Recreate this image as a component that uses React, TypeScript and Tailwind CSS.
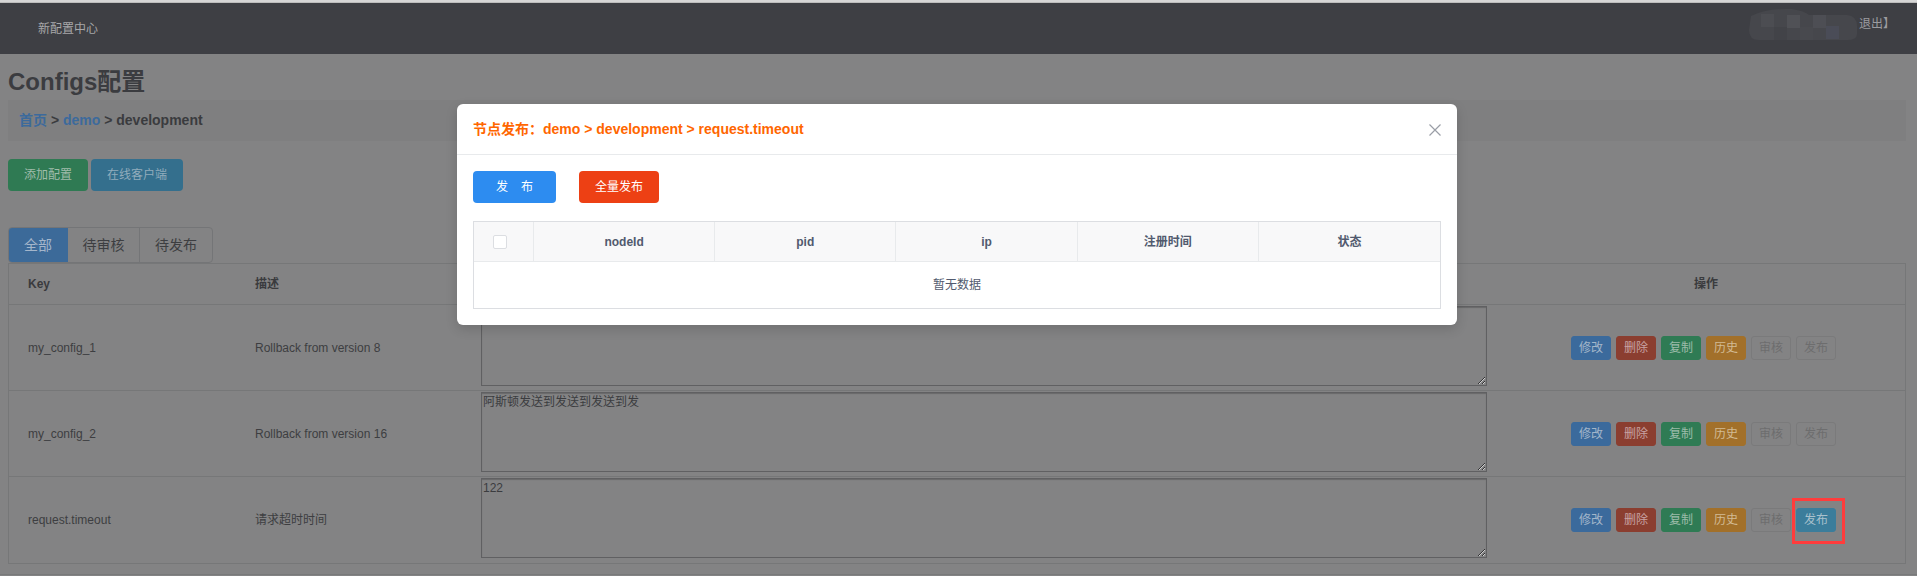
import React from "react";

const rows = [
  { key: "my_config_1", desc: "Rollback from version 8", value: "", canPublish: false },
  { key: "my_config_2", desc: "Rollback from version 16", value: "阿斯顿发送到发送到发送到发", canPublish: false },
  { key: "request.timeout", desc: "请求超时时间", value: "122", canPublish: true },
];

const actionBtns = [
  { label: "修改", cls: "bg-[#3b6a9c] border-[#3b6a9c] text-[#a3b6ca]" },
  { label: "删除", cls: "bg-[#8b3e30] border-[#8b3e30] text-[#c8a3a3]" },
  { label: "复制", cls: "bg-[#2f7b54] border-[#2f7b54] text-[#9dbbaa]" },
  { label: "历史", cls: "bg-[#a2702a] border-[#a2702a] text-[#d2bb95]" },
];

function RowActions({ canPublish }: { canPublish: boolean }) {
  return (
    <div className="flex items-center gap-[5px] pr-[5px]">
      {actionBtns.map((b) => (
        <button
          key={b.label}
          className={`w-[40px] h-[24px] rounded-[3px] border text-[12px] leading-[22px] ${b.cls}`}
        >
          {b.label}
        </button>
      ))}
      <button className="w-[40px] h-[24px] rounded-[3px] border border-[#7a7a7b] text-[12px] leading-[22px] text-[#6d6d6e]">
        审核
      </button>
      {canPublish ? (
        <span className="relative inline-flex">
          <button className="w-[40px] h-[24px] rounded-[3px] border border-[#3b7d9b] bg-[#3b7d9b] text-[12px] leading-[22px] text-[#a9c1cd]">
            发布
          </button>
          {/* red annotation box */}
          <span className="absolute -left-[4px] -top-[10px] w-[53px] h-[46px] border-[3px] border-[#ff3c3c] pointer-events-none"></span>
        </span>
      ) : (
        <button className="w-[40px] h-[24px] rounded-[3px] border border-[#7a7a7b] text-[12px] leading-[22px] text-[#6d6d6e]">
          发布
        </button>
      )}
    </div>
  );
}

function PublishModal() {
  const cols = ["nodeId", "pid", "ip", "注册时间", "状态"];
  return (
    <div className="absolute left-[457px] top-[104px] w-[1000px] bg-white rounded-[6px] shadow-[0_4px_12px_rgba(0,0,0,0.15)]">
      <div className="h-[51px] px-[16px] flex items-center justify-between border-b border-[#e8eaec]">
        <span className="text-[14px] font-bold text-[#ff6600] leading-[20px]">
          节点发布：demo &gt; development &gt; request.timeout
        </span>
        <svg width="12" height="12" viewBox="0 0 12 12" className="mt-[1px]">
          <path d="M0.5 0.5 L11.5 11.5 M11.5 0.5 L0.5 11.5" stroke="#9a9ea6" strokeWidth="1.2" />
        </svg>
      </div>

      <div className="p-[16px]">
        <div className="flex items-center">
          <button className="w-[83px] h-[32px] rounded-[4px] bg-[#2d8cf0] text-white text-[12px] flex items-center justify-center gap-[13px]">
            <span>发</span>
            <span>布</span>
          </button>
          <button className="ml-[23px] w-[80px] h-[32px] rounded-[4px] bg-[#ed4014] text-white text-[12px]">
            全量发布
          </button>
        </div>

        <div className="mt-[18px] border border-[#dcdee2]">
          <div className="grid grid-cols-[60px_repeat(5,1fr)] h-[40px] bg-[#f8f8f9] border-b border-[#e8eaec]">
            <div className="flex items-center pl-[19px] border-r border-[#e8eaec]">
              <span className="w-[14px] h-[14px] border border-[#dcdee2] rounded-[2px] bg-white"></span>
            </div>
            {cols.map((c, i) => (
              <div
                key={c}
                className={`flex items-center justify-center text-[12px] font-bold text-[#515a6e] ${
                  i < cols.length - 1 ? "border-r border-[#e8eaec]" : ""
                }`}
              >
                {c}
              </div>
            ))}
          </div>
          <div className="h-[46px] flex items-center justify-center text-[12px] text-[#515a6e]">
            暂无数据
          </div>
        </div>
      </div>
    </div>
  );
}

export default function App() {
  return (
    <div className="relative w-[1917px] h-[576px] overflow-hidden bg-[#838384] font-['Liberation_Sans','Noto_Sans_CJK_SC',sans-serif]">
      <div className="h-[3px] bg-[#d6d6d6] border-b border-[#bdbdbd]"></div>

      {/* top navbar */}
      <div className="h-[51px] bg-[#3e3f44] flex justify-between pl-[38px] pr-[22px]">
        <div className="flex items-center text-[12px] text-[#a7a7a9]">新配置中心</div>
        <div className="flex items-start pt-[3px]">
          <svg width="112" height="34" viewBox="0 0 112 34">
            <path d="M4 10 Q20 2 45 3 Q58 5 62 9 L100 9 Q110 10 110 20 L110 28 Q110 34 100 34 L12 34 Q2 34 2 24 Z" fill="#46474c" />
            <rect x="14" y="8" width="13" height="13" fill="#4c4d52" />
            <rect x="40" y="9" width="13" height="13" fill="#505156" />
            <rect x="66" y="9" width="13" height="13" fill="#4d4e54" />
            <rect x="79" y="20" width="13" height="13" fill="#4a4c57" />
            <rect x="27" y="21" width="13" height="13" fill="#424348" />
            <rect x="53" y="21" width="13" height="13" fill="#48494e" />
          </svg>
          <span className="text-[12px] leading-[18px] text-[#9c9ca0] mt-[9px]">退出】</span>
        </div>
      </div>

      <div className="ml-[8px] w-[1898px]">
        <h1 className="mt-[13px] text-[24px] leading-[30px] font-bold text-[#3b3c40]">Configs配置</h1>

        <div className="mt-[3px] h-[41px] bg-[#7f7f80] pl-[11px] flex items-center text-[14px] font-bold text-[#3a3b3e]">
          <span className="text-[#3c6a9c]">首页</span>
          <span className="whitespace-pre"> &gt; </span>
          <span className="text-[#3c6a9c]">demo</span>
          <span className="whitespace-pre"> &gt; development</span>
        </div>

        <div className="mt-[18px] flex gap-[3px]">
          <button className="w-[80px] h-[32px] rounded-[4px] bg-[#2f7a53] text-[12px] text-[#a0bcab]">添加配置</button>
          <button className="w-[92px] h-[32px] rounded-[4px] bg-[#346f8d] text-[12px] text-[#91acbc]">在线客户端</button>
        </div>

        {/* tabs */}
        <div className="mt-[36px] flex">
          <div className="flex h-[36px] rounded-[4px] border border-[#747577] overflow-hidden text-[14px]">
            <div className="w-[60px] -my-px -ml-px bg-[#3c6a99] text-[#a4b6cb] flex items-center justify-center">全部</div>
            <div className="w-[72px] border-r border-[#747577] text-[#3d3e41] flex items-center justify-center">待审核</div>
            <div className="w-[72px] text-[#3d3e41] flex items-center justify-center">待发布</div>
          </div>
        </div>

        {/* config table */}
        <div className="border border-[#767778] text-[12px] text-[#3d3e41]">
          <div className="grid grid-cols-[227px_228px_1043px_1fr] h-[41px] border-b border-[#767778] font-bold text-[#3a3b3e]">
            <div className="pl-[19px] flex items-center">Key</div>
            <div className="pl-[19px] flex items-center">描述</div>
            <div className="pl-[19px] flex items-center">值</div>
            <div className="flex items-center justify-center">操作</div>
          </div>
          {rows.map((r, i) => (
            <div
              key={r.key}
              className={`grid grid-cols-[227px_228px_1043px_1fr] h-[86px] ${
                i < rows.length - 1 ? "border-b border-[#767778]" : ""
              }`}
            >
              <div className="pl-[19px] flex items-center">{r.key}</div>
              <div className="pl-[19px] flex items-center">{r.desc}</div>
              <div className="pl-[17px] pt-px">
                <textarea
                  readOnly
                  defaultValue={r.value}
                  className="block w-[1006px] h-[80px] bg-transparent border border-[#606062] shadow-[inset_0_1px_1px_rgba(0,0,0,0.2)] px-px py-0 text-[12px] leading-[18px] text-[#3b3c3f] outline-none"
                />
              </div>
              <div className="flex items-center justify-center">
                <RowActions canPublish={r.canPublish} />
              </div>
            </div>
          ))}
        </div>
      </div>

      <div className="mt-[10px] h-px bg-[#78797a]"></div>

      <PublishModal />
    </div>
  );
}
